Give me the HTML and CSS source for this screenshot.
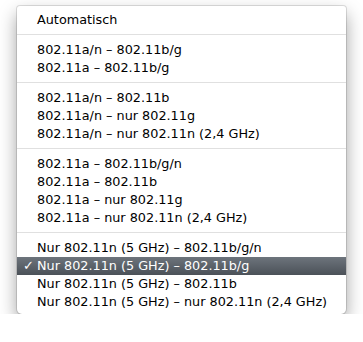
FILE: index.html
```html
<!DOCTYPE html>
<html lang="de">
<head>
  <meta charset="UTF-8">
  <meta name="viewport" content="width=device-width, initial-scale=1.0">
  <title>WLAN-Modus</title>
  <link rel="stylesheet" href="styles.css">
</head>
<body>

  <ul class="menu">
    <li class="item">Automatisch</li>
    <li class="separator"></li>
    <li class="item">802.11a/n – 802.11b/g</li>
    <li class="item">802.11a – 802.11b/g</li>
    <li class="separator"></li>
    <li class="item">802.11a/n – 802.11b</li>
    <li class="item">802.11a/n – nur 802.11g</li>
    <li class="item">802.11a/n – nur 802.11n (2,4 GHz)</li>
    <li class="separator"></li>
    <li class="item">802.11a – 802.11b/g/n</li>
    <li class="item">802.11a – 802.11b</li>
    <li class="item">802.11a – nur 802.11g</li>
    <li class="item">802.11a – nur 802.11n (2,4 GHz)</li>
    <li class="separator"></li>
    <li class="item">Nur 802.11n (5 GHz) – 802.11b/g/n</li>
    <li class="item selected"><span class="check">✓</span>Nur 802.11n (5 GHz) – 802.11b/g</li>
    <li class="item">Nur 802.11n (5 GHz) – 802.11b</li>
    <li class="item">Nur 802.11n (5 GHz) – nur 802.11n (2,4 GHz)</li>
  </ul>

</body>
</html>
```

FILE: styles.css
```css
body {
  margin: 0;
  background: #fff;
  font-family: "DejaVu Sans", "Liberation Sans", sans-serif;
  font-size: 12.8px;
  color: #000;
}

.menu {
  list-style-type: none;
  margin: 6px 0 0 17px;
  padding: 5px 0 3px;
  width: 329px;
  box-sizing: border-box;
  background: #fff;
  border-radius: 3px 3px 5px 5px;
  box-shadow: 0 0 0 1px rgba(0, 0, 0, 0.12), 0 8px 18px rgba(0, 0, 0, 0.38);
}

.item {
  position: relative;
  height: 18px;
  line-height: 18px;
  padding-left: 20px;
  white-space: nowrap;
}

.separator {
  height: 1px;
  margin: 5px 0 6px;
  background: #e0e0e0;
}

.selected {
  color: #fff;
  background: linear-gradient(#6d747c, #4b5158);
}

.check {
  position: absolute;
  left: 6px;
  top: 0;
  font-size: 13px;
  font-weight: bold;
}
```
